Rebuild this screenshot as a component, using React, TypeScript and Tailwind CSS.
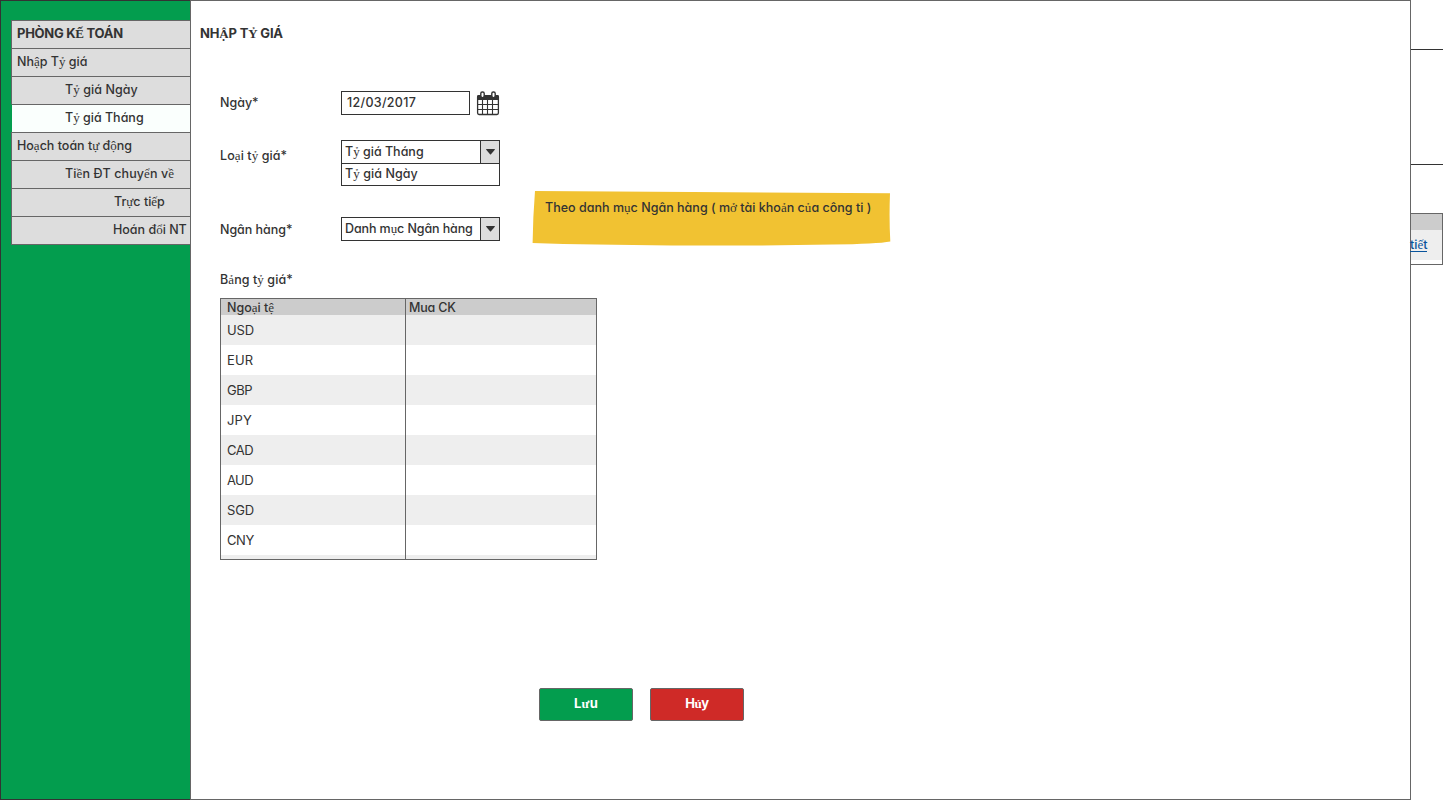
import type { ReactNode } from "react";

/* Tone-marked Vietnamese letters are set in the serif fallback face. */
function T({ children, className = "" }: { children: string; className?: string }) {
  return (
    <span className={"inline-block whitespace-pre " + className}>
      {children.split(/([\u1EA0-\u1EF9ươƯƠ]+)/).map((part, i) =>
        i % 2 ? (
          <span key={i} className="font-['Liberation_Serif',serif] text-[13px]">{part}</span>
        ) : (
          part
        ),
      )}
    </span>
  );
}

const menu = [
  { label: "PHÒNG KẾ TOÁN", className: "pl-[5px] text-[13px] font-bold tracking-[-0.27px]" },
  { label: "Nhập Tỷ giá", className: "pl-[5px]" },
  { label: "Tỷ giá Ngày", className: "pl-[53px] tracking-[0.06px]" },
  { label: "Tỷ giá Tháng", className: "pl-[53px]", active: true },
  { label: "Hoạch toán tự động", className: "pl-[5px]" },
  { label: "Tiền ĐT chuyển về", className: "pl-[53px] tracking-[0.1px]" },
  { label: "Trực tiếp", className: "pl-[102px]" },
  { label: "Hoán đổi NT", className: "pl-[101px]" },
];

const currencies = [
  { code: "USD", className: "tracking-[-0.1px]" },
  { code: "EUR", className: "tracking-[0.1px]" },
  { code: "GBP", className: "tracking-[-0.5px]" },
  { code: "JPY", className: "tracking-[0.2px]" },
  { code: "CAD", className: "tracking-[-0.5px]" },
  { code: "AUD", className: "tracking-[-0.6px]" },
  { code: "SGD", className: "tracking-[-0.1px]" },
  { code: "CNY", className: "tracking-[-0.4px]" },
];

function Sidebar() {
  return (
    <aside className="w-[190px] shrink-0 border-l border-t border-b border-[#333] bg-[#039d4e] pl-[10px] pt-[19px]">
      <nav className="border-b border-l border-[#666]">
        {menu.map((m) => (
          <div
            key={m.label}
            className={
              "h-7 leading-[25px] " +
              (m.active ? "-ml-px border-l border-l-[#039d4e] border-t border-t-[#666] bg-[#fafffd] " : "border-t border-[#666] bg-[#ddd] ")
            }
          >
            <T className={m.className}>{m.label}</T>
          </div>
        ))}
      </nav>
    </aside>
  );
}

function CalendarIcon() {
  return (
    <svg className="ml-[6px] h-[26px] w-6 shrink-0" viewBox="0 0 24 26" fill="none">
      <rect x="1.6" y="5.6" width="20.8" height="18.9" rx="1.4" fill="#fff" stroke="#333" strokeWidth="1.3" />
      <path d="M1 10V6.500Q1 5 2.500 5H21.500Q23 5 23 6.500V10Z" fill="#333" />
      <path d="M6.500 9V25M11.500 9V25M16.500 9V25M1.500 14.500H22.500M1.500 19.500H22.500" stroke="#333" strokeWidth="1.100" />
      <rect x="4.800" y="2" width="3.400" height="5.600" rx="1.500" fill="#fff" stroke="#333" strokeWidth="1.400" />
      <rect x="15.800" y="2" width="3.400" height="5.600" rx="1.500" fill="#fff" stroke="#333" strokeWidth="1.400" />
    </svg>
  );
}

function Select({ children }: { children: ReactNode }) {
  return (
    <div className="flex h-6 w-[159px] border border-[#333] bg-white">
      <div className="flex-1 pl-[3px] leading-[21px]">{children}</div>
      <div className="flex w-[19px] items-center justify-center border-l border-[#333] bg-[#ddd]">
        <svg className="h-[6px] w-[9px]" viewBox="0 0 9 6">
          <path d="M0.500 0H8.500Q9.200 0.300 8.800 0.800L5 5.300Q4.500 5.800 4 5.300L0.200 0.800Q-0.200 0.300 0.500 0Z" fill="#333" />
        </svg>
      </div>
    </div>
  );
}

function Note() {
  return (
    <div className="relative h-[56px] w-[360px]">
      <svg className="absolute inset-0 h-full w-full" viewBox="0 0 360 56">
        <path d="M3 1L160 2L358 3.300Q357 28 358.300 51.500Q345 54 300 54.500Q220 56 140 55.400Q60 55 0.600 53Q1 26 3 1Z" fill="#f1c232" />
      </svg>
      <T className="relative pl-[13px] pt-[7px] leading-[22px] tracking-[0.02px]">Theo danh mục Ngân hàng ( mở tài khoản của công ti )</T>
    </div>
  );
}

function RateTable() {
  return (
    <div className="flex h-[262px] w-[377px] flex-col overflow-hidden border border-[#666]">
      <div className="flex h-4 shrink-0 bg-[#ccc] leading-[18px]">
        <div className="w-[185px] border-r border-[#666] pl-[6px]"><T>Ngoại tệ</T></div>
        <div className="pl-[3px]"><T className="tracking-[-0.2px]">Mua CK</T></div>
      </div>
      {currencies.map((c) => (
        <div key={c.code} className="flex h-[30px] shrink-0 odd:bg-white even:bg-[#eee]">
          <div className="w-[185px] border-r border-[#666] pl-[6px] text-[13px] font-normal leading-[30px]"><T className={c.className}>{c.code}</T></div>
        </div>
      ))}
      <div className="flex flex-1 bg-[#eee]"><div className="w-[185px] border-r border-[#666]" /></div>
    </div>
  );
}

export default function App() {
  return (
    <div className="flex h-[800px] w-[1443px] overflow-hidden bg-white font-['Inter','Liberation_Sans',sans-serif] text-[12.5px] font-medium text-[#333] [font-feature-settings:'cv11']">
      <Sidebar />
      <main className="w-[1221px] shrink-0 border border-[#666]">
        <h1 className="pl-[9px] pt-[20px] text-[13px] font-bold leading-6"><T className="tracking-[-0.17px]">NHẬP TỶ GIÁ</T></h1>
        <div className="flex pl-[29px] pt-[44px]">
          <div className="w-[312px]">
            <div className="flex h-[26px]">
              <div className="w-[121px] leading-[26px]"><T>Ngày*</T></div>
              <div className="mt-px h-6 w-[129px] border border-[#333] pl-[5px] leading-[21px]"><T className="tracking-[0.3px]">12/03/2017</T></div>
              <CalendarIcon />
            </div>
            <div className="mt-6 flex h-[46px]">
              <div className="w-[121px] pt-1 leading-[24px]"><T className="tracking-[0.08px]">Loại tỷ giá*</T></div>
              <div>
                <Select><T>Tỷ giá Tháng</T></Select>
                <div className="h-[22px] w-[159px] border border-t-0 border-[#333] pl-[3px] leading-[19px]"><T className="tracking-[0.06px]">Tỷ giá Ngày</T></div>
              </div>
            </div>
            <div className="mt-[31px] flex h-6">
              <div className="w-[121px] leading-[25px]"><T className="tracking-[-0.04px]">Ngân hàng*</T></div>
              <Select><T className="tracking-[-0.1px]">Danh mục Ngân hàng</T></Select>
            </div>
            <div className="mt-[27px] h-[30px] leading-[24px]"><T className="tracking-[0.08px]">Bảng tỷ giá*</T></div>
            <RateTable />
          </div>
          <div className="pt-[100px]"><Note /></div>
        </div>
        <div className="mt-32 flex gap-[17px] pl-[348px] text-[13px] font-bold leading-[29px] text-white">
          <button className="h-[33px] w-[94px] rounded-[2px] border border-[#666] bg-[#039d4e] pb-[2px]"><T className="tracking-[0.3px]">Lưu</T></button>
          <button className="h-[33px] w-[94px] rounded-[2px] border border-[#666] bg-[#cf2a27] pb-[2px]"><T className="tracking-[-0.4px]">Hủy</T></button>
        </div>
      </main>
      <div className="flex flex-1 flex-col">
        <div className="h-[50px] border-b border-[#333]" />
        <div className="h-[115px] border-b border-[#333]" />
        <div className="mt-12 h-[52px] border-y border-r border-[#666]">
          <div className="h-4 bg-[#ccc]" />
          <div className="h-[30px] bg-[#eee] leading-[30px] text-[#08549c]">
            <T className="-ml-px border-b border-[#08549c] pt-px leading-[13px]">tiết</T>
          </div>
        </div>
      </div>
    </div>
  );
}
